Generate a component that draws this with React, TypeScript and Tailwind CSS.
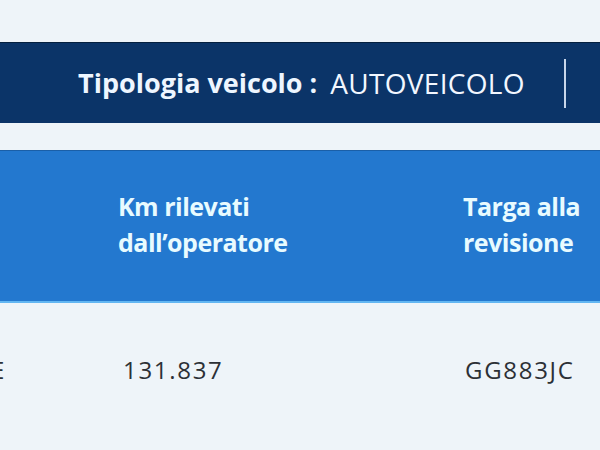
export default function App() {
  return (
    <div className="w-[600px] h-[450px] overflow-hidden bg-[#eef4f9] pt-[42px] font-['Open_Sans',_'Liberation_Sans',_sans-serif]">
      {/* Vehicle type bar */}
      <div className="h-[81px] bg-[#0b3468] border-t border-[#05203f] flex items-center pl-[78px] text-white">
        <span className="text-[27px] font-bold text-[#eef6ff]">Tipologia veicolo :</span>
        <span className="ml-[13px] text-[28px] font-normal tracking-[0.3px] text-[#f2f7ff]">AUTOVEICOLO</span>
        <div className="ml-[39px] w-[2px] h-[49px] bg-[#c8d6ea]" />
      </div>

      {/* Table header */}
      <div className="mt-[27px] h-[153px] bg-[#2378cf] border-t border-[#1a5fa8] border-b-2 border-b-[#62b6f2] grid grid-cols-[118px_345px_1fr] items-center">
        <div />
        <div className="-mt-[4px] text-[25px] font-bold leading-[36px] tracking-[-0.5px] text-[#e8fbff]">
          Km rilevati
          <br />
          dall’operatore
        </div>
        <div className="-mt-[4px] text-[25px] font-bold leading-[36px] tracking-[-0.5px] text-[#e8fbff]">
          Targa alla
          <br />
          revisione
        </div>
      </div>

      {/* Table row */}
      <div className="grid grid-cols-[118px_345px_1fr] pt-[49px] text-[24px] tracking-[1.7px] text-[#2c3036]">
        <div className="overflow-hidden">
          <span className="block -ml-[9px]">E</span>
        </div>
        <div className="pl-[5px]">131.837</div>
        <div className="pl-[2px]">GG883JC</div>
      </div>
    </div>
  );
}
